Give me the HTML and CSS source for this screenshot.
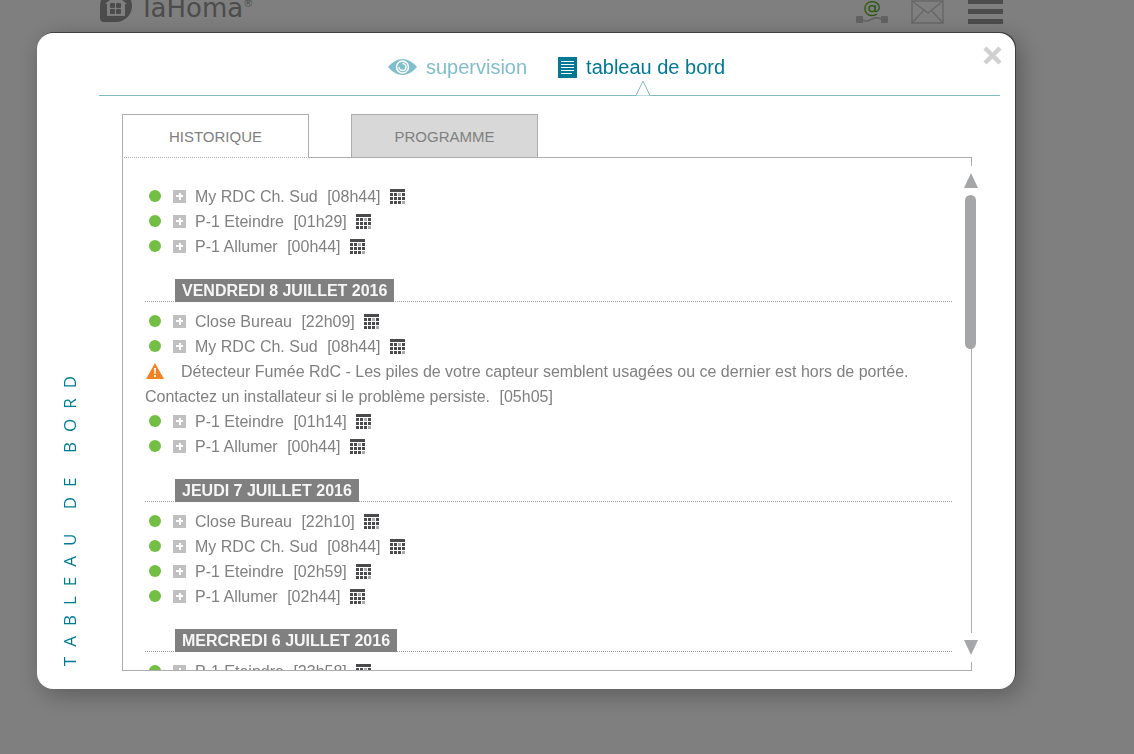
FILE: index.html
```html
<!DOCTYPE html>
<html lang="fr">
<head>
  <meta charset="utf-8">
  <title>TaHoma - Tableau de bord</title>
  <link rel="stylesheet" href="styles.css">
</head>
<body>
  <!-- icons used more than once -->
  <svg class="sprite" aria-hidden="true">
    <symbol id="calendar" viewBox="0 0 15 15">
      <path fill="#4a4a4c" d="M0 0h15v3H0zM0 4h3v3H0zM4 4h3v3H4zM12 4h3v3h-3zM0 8h3v3H0zM4 8h3v3H4zM8 8h3v3H8zM12 8h3v3h-3zM0 12h3v3H0zM4 12h3v3H4zM8 12h3v3H8z"/>
      <path fill="#a8a8aa" d="M8 4h3v3H8zM12 12h3v3h-3z"/>
    </symbol>
    <symbol id="warning" viewBox="0 0 18 16">
      <path fill="#f58220" d="M9 0l9 16H0z"/>
      <path fill="#fff" d="M8 5h2l-.4 6H8.400zM8 12h2v2H8z"/>
    </symbol>
  </svg>

  <header class="page-header">
    <a class="brand" href="#">
      <svg width="32" height="32" viewBox="0 0 32 32">
        <path fill="#989898" d="M16 0a16 16 0 0 1 0 32H4a4 4 0 0 1-4-4V16A16 16 0 0 1 16 0z"/>
        <path fill="#fff" d="M16 5l11 9h-2v12H7V14H5z"/>
        <g fill="#989898">
          <rect x="10" y="13" width="5" height="5" rx="1"/>
          <rect x="16" y="13" width="5" height="5" rx="1"/>
          <rect x="10" y="19" width="5" height="5" rx="1"/>
          <rect x="16" y="19" width="5" height="5" rx="1"/>
        </g>
      </svg>
      <span class="brand-name">TaHoma<sup>®</sup></span>
    </a>
    <div class="tools">
      <a class="connection" href="#">
        <span class="at">@</span>
        <svg width="32" height="9" viewBox="0 0 32 9">
          <path fill="#c4c4c4" d="M0 2q0-1 1-1h6v7H1q-1 0-1-1zM25 1h6q1 0 1 1v5q0 1-1 1h-6z"/>
          <path fill="none" stroke="#c4c4c4" stroke-width="1.500" d="M7 5c4 3 7 0 9-1s5-2 9 0"/>
        </svg>
      </a>
      <a href="#" aria-label="Messages">
        <svg class="mail" width="34" height="24" viewBox="0 0 34 24" fill="none" stroke="#d0d0d0" stroke-width="1.500">
          <path d="M1 1h31v22H1zM1 1l16 12L32 1M1 23l12-13M32 23L20 10"/>
        </svg>
      </a>
      <button class="menu" type="button" aria-label="Menu"><span></span><span></span><span></span></button>
    </div>
  </header>

  <div class="overlay">
    <div class="modal">
      <button class="close" type="button" aria-label="Fermer">
        <svg width="19" height="19" viewBox="0 0 19 19" stroke="#d0d0d0" stroke-width="4.500">
          <path d="M2 2l15 15M17 2L2 17"/>
        </svg>
      </button>

      <nav class="main-nav">
        <a href="#">
          <svg width="29" height="18" viewBox="0 0 29 18">
            <path fill="#7fbecb" d="M0 9Q7 1 14.500 1T29 9q-7 8-14.500 8T0 9z"/>
            <circle cx="14.500" cy="9" r="6" fill="none" stroke="#fff" stroke-width="1.500"/>
            <path fill="none" stroke="#fff" stroke-width="1.500" d="M14.500 5.500a3.500 3.500 0 1 1-3.500 3.500"/>
          </svg>
          supervision
        </a>
        <a class="current" href="#">
          <svg width="19" height="21" viewBox="0 0 19 21">
            <path fill="#007a94" d="M0 0h19v21H0z"/>
            <path stroke="#fff" d="M3 4.500h13M3 7.500h13M3 10.500h13M3 13.500h13M3 16.500h11"/>
          </svg>
          tableau de bord
          <svg class="caret" width="16" height="16" viewBox="0 0 16 16">
            <path fill="#fff" stroke="#7fb9c3" d="M1 15.500L8 1l7 14.500"/>
          </svg>
        </a>
      </nav>

      <div class="content">
        <h1 class="side-title">TABLEAU DE BORD</h1>
        <div class="board">
          <div class="tabs">
            <button class="tab active" type="button">HISTORIQUE</button>
            <button class="tab" type="button">PROGRAMME</button>
          </div>
          <div class="panel">
            <div class="history">
              <ul>
                <li><i class="dot"></i><button class="plus" type="button" aria-label="Détails"></button>My RDC Ch. Sud <span class="time">[08h44]</span><svg class="cal"><use href="#calendar"/></svg></li>
                <li><i class="dot"></i><button class="plus" type="button" aria-label="Détails"></button>P-1 Eteindre <span class="time">[01h29]</span><svg class="cal"><use href="#calendar"/></svg></li>
                <li><i class="dot"></i><button class="plus" type="button" aria-label="Détails"></button>P-1 Allumer <span class="time">[00h44]</span><svg class="cal"><use href="#calendar"/></svg></li>
              </ul>
              <h2><span>VENDREDI 8 JUILLET 2016</span></h2>
              <ul>
                <li><i class="dot"></i><button class="plus" type="button" aria-label="Détails"></button>Close Bureau <span class="time">[22h09]</span><svg class="cal"><use href="#calendar"/></svg></li>
                <li><i class="dot"></i><button class="plus" type="button" aria-label="Détails"></button>My RDC Ch. Sud <span class="time">[08h44]</span><svg class="cal"><use href="#calendar"/></svg></li>
                <li><svg class="warn"><use href="#warning"/></svg>Détecteur Fumée RdC - Les piles de votre capteur semblent usagées ou ce dernier est hors de portée. Contactez un installateur si le problème persiste. <span class="time">[05h05]</span></li>
                <li><i class="dot"></i><button class="plus" type="button" aria-label="Détails"></button>P-1 Eteindre <span class="time">[01h14]</span><svg class="cal"><use href="#calendar"/></svg></li>
                <li><i class="dot"></i><button class="plus" type="button" aria-label="Détails"></button>P-1 Allumer <span class="time">[00h44]</span><svg class="cal"><use href="#calendar"/></svg></li>
              </ul>
              <h2><span>JEUDI 7 JUILLET 2016</span></h2>
              <ul>
                <li><i class="dot"></i><button class="plus" type="button" aria-label="Détails"></button>Close Bureau <span class="time">[22h10]</span><svg class="cal"><use href="#calendar"/></svg></li>
                <li><i class="dot"></i><button class="plus" type="button" aria-label="Détails"></button>My RDC Ch. Sud <span class="time">[08h44]</span><svg class="cal"><use href="#calendar"/></svg></li>
                <li><i class="dot"></i><button class="plus" type="button" aria-label="Détails"></button>P-1 Eteindre <span class="time">[02h59]</span><svg class="cal"><use href="#calendar"/></svg></li>
                <li><i class="dot"></i><button class="plus" type="button" aria-label="Détails"></button>P-1 Allumer <span class="time">[02h44]</span><svg class="cal"><use href="#calendar"/></svg></li>
              </ul>
              <h2><span>MERCREDI 6 JUILLET 2016</span></h2>
              <ul>
                <li><i class="dot"></i><button class="plus" type="button" aria-label="Détails"></button>P-1 Eteindre <span class="time">[23h58]</span><svg class="cal"><use href="#calendar"/></svg></li>
              </ul>
            </div>
            <div class="scrollbar">
              <button class="arrow" type="button" aria-label="Monter"><svg width="14" height="15" viewBox="0 0 14 15"><path fill="#a5a6a8" d="M7 0l7 15H0z"/></svg></button>
              <div class="thumb"></div>
              <button class="arrow down" type="button" aria-label="Descendre"><svg width="14" height="15" viewBox="0 0 14 15"><path fill="#a5a6a8" d="M0 0h14L7 15z"/></svg></button>
            </div>
          </div>
        </div>
      </div>
    </div>
  </div>
</body>
</html>
```

FILE: styles.css
```css
* {
  box-sizing: border-box;
}

body {
  margin: 0;
  min-height: 100vh;
  background: #fff;
  color: #808080;
  font: 16px/25px "Liberation Sans", Arial, sans-serif;
  overflow: hidden;
}

a {
  color: inherit;
  text-decoration: none;
}

button {
  padding: 0;
  border: none;
  background: none;
  font: inherit;
  color: inherit;
  cursor: pointer;
}

ul {
  margin: 0;
  padding: 0;
  list-style: none;
}

.sprite {
  display: none;
}

/* page behind the window, scrolled a little */
.page-header {
  display: flex;
  justify-content: space-between;
  align-items: flex-end;
  height: 34px;
  margin: -10px 131px 0 100px;
}

.brand {
  display: flex;
  align-items: flex-end;
  gap: 7px;
  padding-bottom: 2px;
  color: #989898;
}

.brand-name {
  font: 26px/28px "DejaVu Sans", Verdana, sans-serif;
}

.brand-name sup {
  font-size: 10px;
  line-height: 1;
}

.tools {
  display: flex;
  align-items: flex-end;
  gap: 23px;
}

.tools a,
.tools svg {
  display: block;
}

.connection {
  text-align: center;
}

.at {
  display: block;
  color: #56b020;
  font: 18px/16px "DejaVu Sans", Verdana, sans-serif;
}

.menu {
  display: flex;
  flex-direction: column;
  gap: 5px;
  width: 35px;
}

.menu span {
  height: 5px;
  background: #989898;
}

.overlay {
  position: fixed;
  inset: 0;
  padding: 33px 119px 65px 37px;
  background: rgba(0, 0, 0, 0.5);
}

.modal {
  position: relative;
  padding: 14px 15px 18px 0;
  border-radius: 16px;
  background: #fff;
  box-shadow: 1px -1px 0 #3c3f40, 5px 5px 25px rgba(0, 0, 0, 0.3);
}

.close {
  position: absolute;
  top: 13px;
  right: 13px;
  width: 19px;
  height: 19px;
}

.close svg {
  display: block;
}

.main-nav {
  display: flex;
  justify-content: center;
  gap: 31px;
  margin-left: 62px;
  padding-left: 14px;
  height: 49px;
  border-bottom: 1px solid #7fb9c3;
  color: #7fbecb;
  font-size: 20px;
  line-height: 40px;
}

.main-nav a {
  position: relative;
  display: flex;
  align-items: center;
  gap: 9px;
  height: 40px;
}

.main-nav .current {
  color: #007a94;
}

.main-nav .caret {
  position: absolute;
  top: 33px;
  left: 50%;
  margin-left: -7px;
}

.content {
  display: flex;
  padding: 18px 28px 0 24px;
}

.side-title {
  align-self: flex-end;
  width: 61px;
  margin: 0 0 5px;
  color: #007a94;
  font: 400 17px/18px "Open Sans", sans-serif;
  letter-spacing: 10px;
  white-space: nowrap;
  writing-mode: vertical-rl;
  transform: rotate(180deg);
}

.board {
  flex: 1;
  min-width: 0;
}

.tabs {
  display: flex;
  gap: 42px;
}

.tab {
  z-index: 1;
  width: 187px;
  height: 44px;
  margin-bottom: -1px;
  border: 1px solid #adadad;
  background: #d8d8d8;
  font-size: 15px;
}

.tab.active {
  background: #fff;
  border-bottom-style: dotted;
}

.panel {
  position: relative;
  border: 1px solid #adadad;
}

.history {
  max-height: 512px;
  padding: 26px 19px 0 22px;
  overflow: hidden;
}

.history h2 {
  height: 23px;
  margin: 20px 0 7px;
  padding-left: 30px;
  border-bottom: 1px dotted #a0a0a0;
  font-size: 16px;
  line-height: 23px;
}

.history h2 span {
  display: inline-block;
  padding: 0 7px;
  background: #808080;
  color: #f6f6f6;
}

.dot,
.plus,
.cal,
.warn {
  display: inline-block;
  vertical-align: middle;
}

.dot {
  width: 12px;
  height: 12px;
  margin: 0 12px 4px 4px;
  border-radius: 50%;
  background: #72bf44;
}

.plus {
  width: 13px;
  height: 13px;
  margin: 0 9px 3px 0;
  background:
    linear-gradient(#fff, #fff) 3px 5px / 7px 2px no-repeat,
    linear-gradient(#fff, #fff) 6px 3px / 2px 7px no-repeat,
    #c0c0c0;
}

.time {
  margin-left: 5px;
}

.cal {
  width: 15px;
  height: 15px;
  margin: 0 0 2px 9px;
}

.warn {
  width: 18px;
  height: 16px;
  margin: 0 17px 3px 1px;
}

.scrollbar {
  position: absolute;
  top: 8px;
  bottom: 8px;
  right: -7px;
  display: flex;
  flex-direction: column;
  width: 14px;
}

.arrow {
  width: 14px;
  height: 29px;
  background: #fff;
}

.arrow svg {
  display: block;
  margin: auto;
}

.thumb {
  width: 11px;
  height: 154px;
  margin-left: 1px;
  border-radius: 6px;
  background: #a5a6a8;
}

.down {
  margin-top: auto;
}
```
